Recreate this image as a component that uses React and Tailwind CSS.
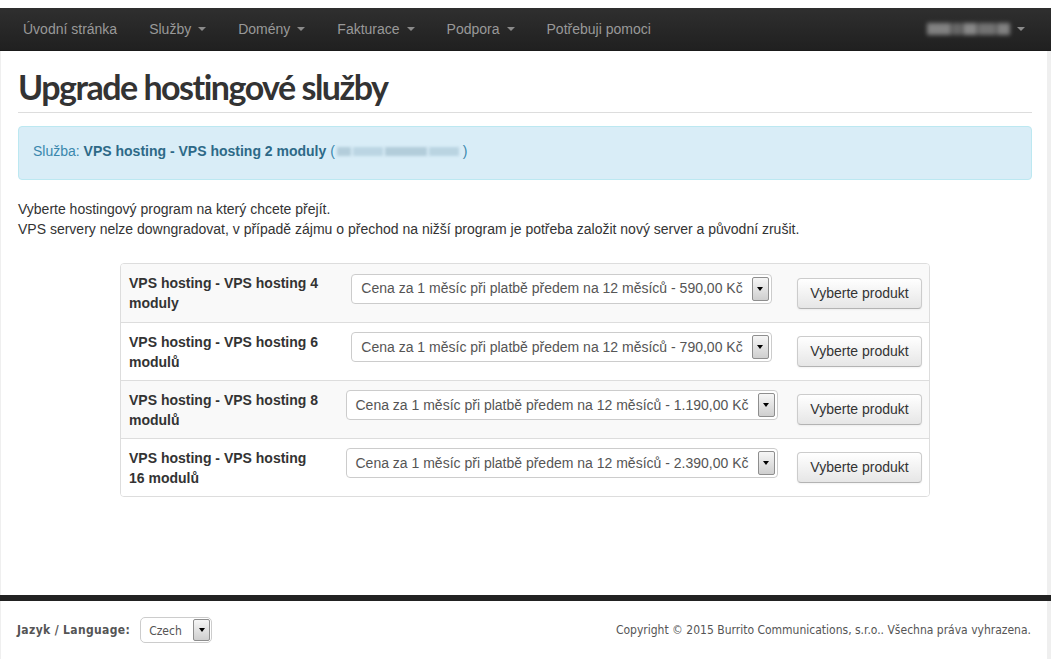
import React from 'react';

const navItems = [
    { label: 'Úvodní stránka' },
    { label: 'Služby', caret: true },
    { label: 'Domény', caret: true },
    { label: 'Fakturace', caret: true },
    { label: 'Podpora', caret: true },
    { label: 'Potřebuji pomoci' },
];

const products = [
    { name: 'VPS hosting - VPS hosting 4 moduly', price: '590,00 Kč' },
    { name: 'VPS hosting - VPS hosting 6 modulů', price: '790,00 Kč' },
    { name: 'VPS hosting - VPS hosting 8 modulů', price: '1.190,00 Kč' },
    { name: 'VPS hosting - VPS hosting 16 modulů', price: '2.390,00 Kč' },
];

const Caret = () => (
    <span className="inline-block ml-[7px] w-0 h-0 border-l-[4px] border-r-[4px] border-t-[4px] border-l-transparent border-r-transparent border-t-[#8a8a8a] align-middle"></span>
);

const SelectArrow = ({ className = '' }) => (
    <span className={`flex items-center justify-center w-[17px] rounded-[2px] border border-[#8e8e8e] bg-gradient-to-b from-[#f6f6f6] to-[#cfcfcf] ${className}`}>
        <span className="w-0 h-0 border-l-[3px] border-r-[3px] border-t-[4px] border-l-transparent border-r-transparent border-t-black"></span>
    </span>
);

const FakeSelect = ({ text }) => (
    <div className="inline-flex items-center h-[30px] mb-[9px] pl-[9px] pr-[2px] bg-white border border-[#ccc] rounded-[4px] text-[14px] text-[#555]">
        <span className="whitespace-nowrap">{text}</span>
        <SelectArrow className="ml-[9px] h-[24px]" />
    </div>
);

export default function App() {
    return (
        <div className="h-[659px] flex flex-col bg-white overflow-hidden" style={{ fontFamily: '"Liberation Sans", Arial, sans-serif' }}>
            <div className="h-[8px] shrink-0"></div>

            {/* Navbar */}
            <nav className="h-[43px] shrink-0 flex items-center justify-between bg-gradient-to-b from-[#2f2f2f] to-[#202020] border-b border-[#1a1a1a] text-[14px] text-[#999]">
                <div className="flex items-center pl-[7px]">
                    {navItems.map((item) => (
                        <span key={item.label} className="px-[16px] flex items-center whitespace-nowrap">
                            {item.label}
                            {item.caret && <Caret />}
                        </span>
                    ))}
                </div>
                <div className="flex items-center pr-[26px]">
                    <span className="flex h-[12px] w-[83px] gap-[1px] blur-[2px] opacity-75">
                        <span className="w-[24px] bg-[#a0a0a0]"></span>
                        <span className="w-[10px] bg-[#7d7d7d]"></span>
                        <span className="w-[14px] bg-[#a8a8a8]"></span>
                        <span className="w-[18px] bg-[#8c8c8c]"></span>
                        <span className="w-[13px] bg-[#9f9f9f]"></span>
                    </span>
                    <Caret />
                </div>
            </nav>

            {/* Main content */}
            <main className="flex-1 border-l border-r-4 border-[#efefef] pl-[17px] pr-[15px] pt-[16px]">
                <h1 className="pb-[5px] border-b border-[#ddd] text-[34px] leading-[40px] font-bold text-[#333] tracking-[-1.5px]" style={{ fontFamily: 'Lato, sans-serif' }}>
                    Upgrade hostingové služby
                </h1>

                <div className="mt-[13px] h-[54px] flex items-start pt-[14px] pl-[14px] bg-[#d9edf7] border border-[#bce8f1] rounded-[4px] text-[14px] leading-[20px] text-[#3a87ad]">
                    <span>Služba:&nbsp;</span>
                    <span className="font-bold text-[#2d6987]">VPS hosting - VPS hosting 2 moduly</span>
                    <span>&nbsp;(</span>
                    {/* blurred account label */}
                    <span className="flex mt-[6px] h-[9px] w-[124px] gap-[2px] blur-[1.5px] opacity-60 mx-[2px]">
                        <span className="w-[14px] bg-[#9bb9c9]"></span>
                        <span className="w-[30px] bg-[#a8c6d6]"></span>
                        <span className="w-[42px] bg-[#9ab8c8]"></span>
                        <span className="w-[30px] bg-[#a6c4d4]"></span>
                    </span>
                    <span>)</span>
                </div>

                <div className="mt-[19px] text-[14px] leading-[20px] text-[#333]">
                    <p>Vyberte hostingový program na který chcete přejít.</p>
                    <p>VPS servery nelze downgradovat, v případě zájmu o přechod na nižší program je potřeba založit nový server a původní zrušit.</p>
                </div>

                {/* Product table */}
                <div className="mt-[24px] mx-auto w-[810px] border border-[#ddd] rounded-[4px] overflow-hidden">
                    {products.map((p, idx) => (
                        <div key={p.name} className={`flex items-center h-[58px] ${idx > 0 ? 'border-t border-[#ddd]' : ''} ${idx % 2 === 0 ? 'bg-[#f9f9f9]' : 'bg-white'}`}>
                            <div className="w-[212px] px-[8px] text-[14px] leading-[20px] font-bold text-[#333]">{p.name}</div>
                            <div className="flex-1 flex justify-center">
                                <FakeSelect text={`Cena za 1 měsíc při platbě předem na 12 měsíců - ${p.price}`} />
                            </div>
                            <div className="w-[139px] flex justify-center">
                                <button className="h-[31px] px-[12px] text-[14px] text-[#333] bg-gradient-to-b from-white to-[#e6e6e6] border border-[#ccc] border-b-[#b3b3b3] rounded-[4px] shadow-[inset_0_1px_0_rgba(255,255,255,0.2),0_1px_2px_rgba(0,0,0,0.05)]">
                                    Vyberte produkt
                                </button>
                            </div>
                        </div>
                    ))}
                </div>
            </main>

            {/* Footer */}
            <div className="h-[6px] shrink-0 bg-[#222]"></div>
            <footer className="h-[58px] shrink-0 flex items-center justify-between border-l border-r-4 border-[#efefef] pl-[16px] pr-[16px] text-[12px] text-[#555]" style={{ fontFamily: '"DejaVu Sans Condensed", "DejaVu Sans", sans-serif' }}>
                <div className="flex items-center">
                    <span className="font-bold tracking-[0.35px]">Jazyk / Language:</span>
                    <div className="ml-[10px] flex items-center h-[26px] w-[72px] pl-[8px] pr-[1px] border border-[#ccc] rounded-[5px] bg-white">
                        <span className="flex-1 pt-[2px]">Czech</span>
                        <SelectArrow className="h-[22px]" />
                    </div>
                </div>
                <span>Copyright © 2015 Burrito Communications, s.r.o.. Všechna práva vyhrazena.</span>
            </footer>
        </div>
    );
}
